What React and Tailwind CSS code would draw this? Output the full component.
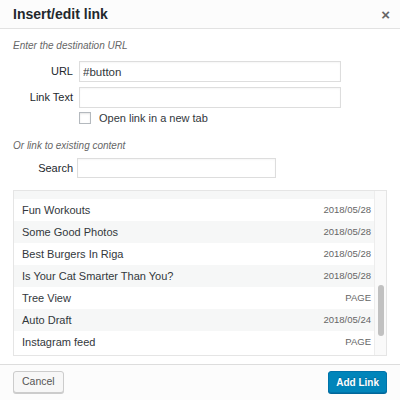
const posts = [
    { title: 'Fun Workouts', info: '2018/05/28' },
    { title: 'Some Good Photos', info: '2018/05/28' },
    { title: 'Best Burgers In Riga', info: '2018/05/28' },
    { title: 'Is Your Cat Smarter Than You?', info: '2018/05/28' },
    { title: 'Tree View', info: 'PAGE' },
    { title: 'Auto Draft', info: '2018/05/24' },
    { title: 'Instagram feed', info: 'PAGE' },
];

function ResultRow({ title, info, odd }) {
    return (
        <div
            className={
                'flex h-[22px] items-center justify-between pl-[8px] pr-[3px] ' +
                (odd ? 'bg-[#f6f7f7]' : 'bg-white')
            }
        >
            <span className="text-[11px] leading-[13px] text-[#32373c]">{title}</span>
            <span className="text-[9.5px] text-[#666]">{info}</span>
        </div>
    );
}

export default function App() {
    return (
        <div
            className="flex h-[400px] w-[400px] flex-col bg-white text-[#23282d]"
            style={{ fontFamily: '"Liberation Sans", Arial, sans-serif' }}
        >
            <header className="flex h-[29px] shrink-0 items-center justify-between border-b border-[#e2e2e2] bg-[#fcfcfc] pl-[13px] pr-[10px]">
                <h1 className="text-[14px] font-bold text-[#23282d]">
                    Insert/edit link
                </h1>
                <span className="text-[15px] font-bold leading-none text-[#666]">
                    ×
                </span>
            </header>

            <div className="flex-1 px-[13px] pt-[10px]">
                <p className="text-[10px] italic leading-[14px] text-[#666]">
                    Enter the destination URL
                </p>

                <div className="mt-[8px] flex items-center">
                    <label className="w-[60px] text-right text-[11px]">URL</label>
                    <input
                        className="ml-[6px] h-[21px] w-[262px] border border-[#ddd] px-[3px] text-[11.5px] text-[#32373c] outline-none shadow-[inset_0_1px_2px_rgba(0,0,0,0.04)]"
                        defaultValue="#button"
                    />
                </div>
                <div className="mt-[5px] flex items-center">
                    <label className="w-[60px] text-right text-[11px]">
                        Link Text
                    </label>
                    <input className="ml-[6px] h-[21px] w-[262px] border border-[#ddd] px-[3px] outline-none shadow-[inset_0_1px_2px_rgba(0,0,0,0.04)]" />
                </div>
                <div className="mt-[4px] flex items-center pl-[66px]">
                    <span className="h-[12px] w-[12px] border border-[#b4b9be] bg-white shadow-[inset_0_1px_2px_rgba(0,0,0,0.1)]" />
                    <span className="ml-[8px] text-[11px] leading-[12px] text-[#32373c]">
                        Open link in a new tab
                    </span>
                </div>

                <p className="mt-[15px] text-[10px] italic leading-[14px] text-[#666]">
                    Or link to existing content
                </p>
                <div className="mt-[5px] flex items-center">
                    <label className="w-[60px] text-right text-[11px]">
                        Search
                    </label>
                    <input className="ml-[4px] h-[20px] w-[199px] border border-[#ddd] px-[3px] outline-none shadow-[inset_0_1px_2px_rgba(0,0,0,0.04)]" />
                </div>

                <div className="mt-[12px] flex h-[166px] border border-[#e5e5e5]">
                    <div className="flex-1 overflow-hidden">
                        {/* bottom of the row scrolled out of view */}
                        <div className="h-[8px] bg-[#f6f7f7]" />
                        {posts.map((p, i) => (
                            <ResultRow key={p.title} {...p} odd={i % 2 === 1} />
                        ))}
                    </div>
                    <div className="flex w-[12px] flex-col items-center border-l border-[#ededed] bg-[#fafafa] pt-[94px]">
                        <div className="h-[51px] w-[6px] rounded-full bg-[#c1c1c1]" />
                    </div>
                </div>
            </div>

            <footer className="flex h-[36px] shrink-0 items-start justify-between border-t border-[#ddd] bg-[#fcfcfc] px-[13px] pt-[6px]">
                <button className="h-[22px] rounded-[3px] border border-[#ccc] bg-[#f7f7f7] px-[8px] text-[10.5px] text-[#555] shadow-[0_1px_0_#ccc]">
                    Cancel
                </button>
                <button className="h-[22px] rounded-[3px] border border-[#0073aa] bg-[#0085ba] px-[7px] text-[10px] font-bold text-white shadow-[0_1px_0_#006799] [text-shadow:0_-1px_1px_#006799]">
                    Add Link
                </button>
            </footer>
        </div>
    );
}
